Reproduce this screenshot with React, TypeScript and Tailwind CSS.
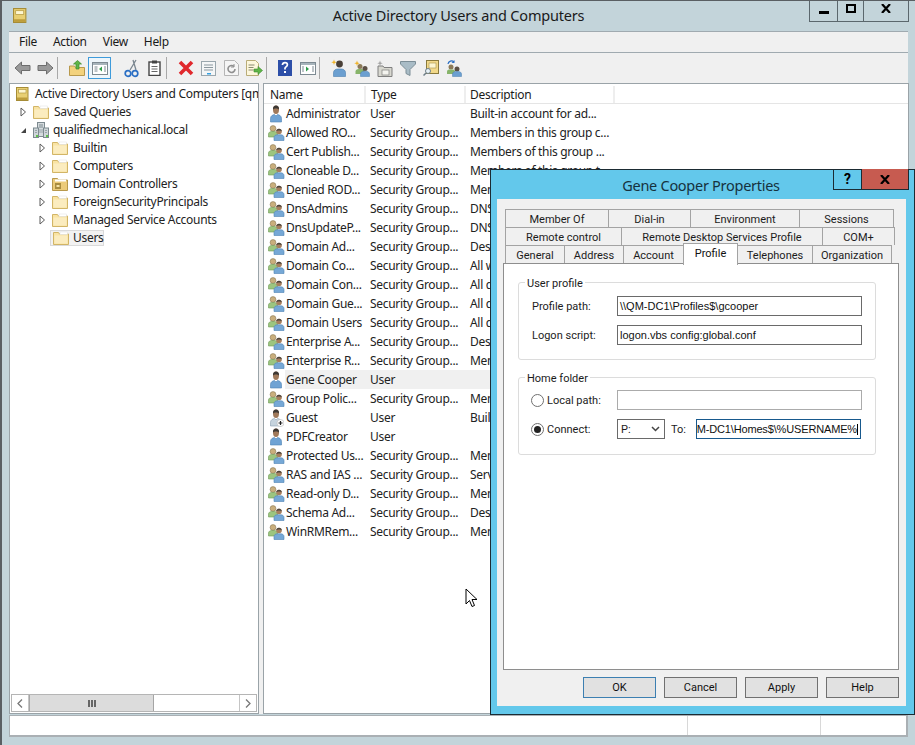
import React from "react";

const F = "[font-family:'Noto_Sans','Liberation_Sans',sans-serif]";

const Folder = () => (
  <svg width="16" height="14" viewBox="0 0 16 14" className="shrink-0">
    <path d="M.5 13.500V1.500h5l1 1.500h9v10.500z" fill="#f9e3a3" stroke="#d2b566" />
    <rect x="7" y="1" width="7.500" height="2.500" fill="#fff" stroke="#ddd" strokeWidth=".5" />
    <path d="M1.500 12.500V4.500h13v8z" fill="#fbecbf" />
  </svg>
);
const SpecialFolder = () => (
  <svg width="16" height="14" viewBox="0 0 16 14" className="shrink-0">
    <path d="M.5 13.500V1.500h5l1 1.500h9v10.500z" fill="#eccb7a" stroke="#b8994c" />
    <rect x="3" y="2.500" width="11" height="2" fill="#fff" />
    <rect x="3" y="6" width="6" height="6" fill="#a98c3f" />
    <rect x="4.500" y="8" width="3" height="2" fill="#f7e3a5" />
  </svg>
);
const Snapin = ({ s = 14 }: { s?: number }) => (
  <svg width={s} height={s} viewBox="0 0 14 14" className="shrink-0">
    <rect x=".5" y=".5" width="11.500" height="13" fill="#e8cf72" stroke="#a68c36" />
    <rect x="2.500" y="2.500" width="7.500" height="3.500" fill="#fdf6d0" stroke="#b59a44" strokeWidth=".7" />
    <rect x="1" y="10.500" width="10.500" height="2.500" fill="#bd9d3b" />
  </svg>
);
const Domain = () => (
  <svg width="16" height="16" viewBox="0 0 16 16" className="shrink-0">
    <rect x="4.500" y=".5" width="7" height="14" fill="#d5dbde" stroke="#7d8a90" />
    <path d="M6 3h4M6 5h4" stroke="#7d8a90" />
    <rect x=".5" y="6" width="5" height="9.500" fill="#cfd6d9" stroke="#7d8a90" />
    <rect x="10.500" y="6" width="5" height="9.500" fill="#cfd6d9" stroke="#7d8a90" />
    <path d="M2 8.500h2M2 10.500h2M12 8.500h2M12 10.500h2M6 8h4M6 10h4" stroke="#98a4a9" />
    <rect x="3" y="13" width="2" height="2" fill="#5fc24a" />
    <rect x="13" y="13" width="2" height="2" fill="#5fc24a" />
  </svg>
);
const UserIcon = ({ guest }: { guest?: boolean }) => (
  <svg width="16" height="18" viewBox="0 0 16 18" className="shrink-0">
    <ellipse cx="8" cy="4.700" rx="3" ry="4.200" fill="#a0795a" />
    <path d="M5 4.500C4.800 1.500 6.300.5 8 .5s3.200 1 3 4C10 3 6 3 5 4.500z" fill="#3c3834" />
    <path d="M2.500 17v-3.700C2.500 11 4.800 9.700 6.500 9.500L8 11l1.500-1.500c1.700.2 4 1.500 4 3.800V17z" fill={guest ? "#c6d3dd" : "#6fa3d4"} stroke={guest ? "#8ba0b0" : "#4f83b4"} strokeWidth=".6" />
    {guest && <circle cx="12.500" cy="14" r="3.500" fill="#fff" stroke="#aaa" strokeWidth=".5" />}
    {guest && <path d="M10.500 14h4M12.500 12v4" stroke="#222" strokeWidth="1.200" />}
  </svg>
);
const GroupIcon = () => (
  <svg width="17" height="16" viewBox="0 0 17 16" className="shrink-0">
    <circle cx="5" cy="3.500" r="2.900" fill="#c9ae7c" stroke="#8b7a58" strokeWidth=".6" />
    <path d="M.5 12V9c0-1.500 1.500-2.500 3-2.500h3c1.500 0 3 1 3 2.500v3z" fill="#9cc57f" stroke="#6f9a58" strokeWidth=".6" />
    <circle cx="11" cy="6.500" r="2.800" fill="#a67f5e" />
    <path d="M8.300 6.300C8.200 4.500 9.500 3.700 11 3.700s2.800.8 2.700 2.600c-1-1-4.400-1-5.400 0z" fill="#4a443c" />
    <path d="M6 15.500v-3c0-1.600 1.500-2.700 3-2.700h4c1.500 0 3 1.100 3 2.700v3z" fill="#76a8d6" stroke="#4f83b4" strokeWidth=".6" />
  </svg>
);

const Collapsed = () => (
  <svg width="7" height="10" viewBox="0 0 7 10" className="shrink-0">
    <path d="M1 1l4.500 4L1 9z" fill="#fff" stroke="#5a5a5a" />
  </svg>
);
const Expanded = () => (
  <svg width="7" height="7" viewBox="0 0 7 7" className="shrink-0">
    <path d="M6 1v5H1z" fill="#444" />
  </svg>
);

const tools: { ml: number; w?: number; sep?: boolean; el?: React.ReactNode; active?: boolean }[] = [
  { ml: 0, el: <svg width="17" height="14" viewBox="0 0 17 14"><path d="M1 7l6.500-6v3.500H16v5H7.500V13z" fill="#9a9a9a" stroke="#6d6d6d" /></svg> },
  { ml: 0, el: <svg width="17" height="14" viewBox="0 0 17 14"><path d="M16 7L9.500 1v3.500H1v5h8.500V13z" fill="#9a9a9a" stroke="#6d6d6d" /></svg> },
  { ml: 0, sep: true },
  { ml: 7, el: <svg width="16" height="16" viewBox="0 0 16 16"><path d="M.5 15.500V6h5l1 1.500h9v8z" fill="#f3d27d" stroke="#b8994c" /><path d="M7 9V4H4.500L8.500.5l4 3.500H10v5z" fill="#5fb548" stroke="#3d8a2c" strokeWidth=".7" /></svg> },
  { ml: 0, active: true, el: <svg width="16" height="13" viewBox="0 0 16 13"><rect x=".5" y=".5" width="15" height="12" fill="#fff" stroke="#7d8a92" /><rect x="1" y="1" width="14" height="2" fill="#a7b4bb" /><path d="M2.500 5h3M2.500 7h3M2.500 9h3M12 5h2M12 7h2M12 9h2" stroke="#7d8a92" /><path d="M10 4.500v5L7 7z" fill="#2f9e4a" /></svg> },
  { ml: 9, el: <svg width="15" height="19" viewBox="0 0 15 19"><path d="M12 1L6 11M9 1l3 10" stroke="#7b8790" strokeWidth="1.300" fill="none" /><circle cx="4" cy="14.500" r="2.800" fill="none" stroke="#2b6fc4" strokeWidth="1.700" /><circle cx="11" cy="14.500" r="2.800" fill="none" stroke="#2b6fc4" strokeWidth="1.700" /></svg> },
  { ml: 0, el: <svg width="13" height="16" viewBox="0 0 13 16"><rect x="1" y="2" width="11" height="13.500" fill="#fff" stroke="#444" strokeWidth="1.400" /><rect x="4" y=".5" width="5" height="3" fill="#444" /><path d="M3.500 6.500h6M3.500 9h6M3.500 11.500h6" stroke="#666" /></svg> },
  { ml: 0, sep: true },
  { ml: 7, el: <svg width="16" height="16" viewBox="0 0 16 16"><path d="M2 2l12 12M14 2L2 14" stroke="#e0282c" strokeWidth="3.600" /></svg> },
  { ml: 0, el: <svg width="15" height="15" viewBox="0 0 15 15"><rect x=".5" y=".5" width="14" height="14" fill="#f4f6f7" stroke="#9aa7ae" /><path d="M3 4h9M3 6.500h9M3 9h9" stroke="#8a979e" /><rect x="6" y="12" width="4" height="1.500" fill="#35a0e0" /></svg> },
  { ml: 0, el: <svg width="15" height="16" viewBox="0 0 15 16"><path d="M.5.500h10l4 4v11H.500z" fill="#f5f5f5" stroke="#b5b5b5" /><path d="M11 9a3.500 3.500 0 1 1-1-2.500" fill="none" stroke="#8f8f8f" strokeWidth="1.600" /><path d="M10 4v3H7" fill="none" stroke="#8f8f8f" /></svg> },
  { ml: 0, el: <svg width="17" height="16" viewBox="0 0 17 16"><path d="M.5.500h9l3 3v12H.500z" fill="#fdf7dc" stroke="#b9ac78" /><path d="M2.500 5h6M2.500 7.500h5M2.500 10h5" stroke="#8a8a70" /><path d="M8 9h4V6.500l4.500 4-4.500 4V12H8z" fill="#5fb548" stroke="#3d8a2c" strokeWidth=".6" /></svg> },
  { ml: 0, sep: true },
  { ml: 6, el: <svg width="14" height="16" viewBox="0 0 14 16"><rect width="14" height="16" fill="#2d4fa8" /><path d="M7 9.500V8.200c0-1.200 2.400-1.500 2.400-3.400C9.400 3.400 8.300 2.700 7 2.700S4.600 3.400 4.400 5" fill="none" stroke="#fff" strokeWidth="1.700" /><rect x="6" y="11" width="2" height="2" fill="#fff" /></svg> },
  { ml: 0, el: <svg width="16" height="13" viewBox="0 0 16 13"><rect x=".5" y=".5" width="15" height="12" fill="#fff" stroke="#7d8a92" /><rect x="1" y="1" width="14" height="2" fill="#a7b4bb" /><path d="M12 5h2M12 7h2M12 9h2M2 5h2M2 7h2M2 9h2" stroke="#7d8a92" /><path d="M6 4.500v5L9 7z" fill="#2f9e4a" /></svg> },
  { ml: 0, sep: true },
  { ml: 7, el: <svg width="16" height="18" viewBox="0 0 16 18"><path d="M3 .5l.7 2 2 .7-2 .7-.7 2-.7-2-2-.7 2-.7z" fill="#f0b429" /><circle cx="8.500" cy="5" r="3.400" fill="#4a4038" /><path d="M2.500 17.500v-4c0-2 2-3.500 4-3.500h4c2 0 4 1.500 4 3.500v4z" fill="#6b9fd0" stroke="#4a7eaf" strokeWidth=".6" /></svg> },
  { ml: 0, el: <svg width="16" height="17" viewBox="0 0 16 17"><path d="M3 .5l.7 2 2 .7-2 .7-.7 2-.7-2-2-.7 2-.7z" fill="#f0b429" /><circle cx="6" cy="6.500" r="2.500" fill="#8b7a58" /><path d="M1.500 14v-2.500c0-1.500 1.500-2.500 3-2.500h3c1.500 0 3 1 3 2.500V14z" fill="#87b46a" /><circle cx="11" cy="8.500" r="2.500" fill="#5b5045" /><path d="M6.500 16.500v-2.500c0-1.500 1.500-2.800 3-2.800h3c1.500 0 3 1.300 3 2.800v2.500z" fill="#6b9fd0" stroke="#4a7eaf" strokeWidth=".5" /></svg> },
  { ml: 0, el: <svg width="17" height="17" viewBox="0 0 17 17"><path d="M4 .5l.7 2 2 .7-2 .7-.7 2-.7-2-2-.7 2-.7z" fill="#a5a5a5" /><path d="M2 6h5l1 1.500h8v9H2z" fill="#d8d8d0" stroke="#7f7f7f" /><rect x="6" y="10" width="7" height="5" fill="#f4f4ef" stroke="#7f7f7f" strokeWidth=".7" /></svg> },
  { ml: 0, el: <svg width="16" height="15" viewBox="0 0 16 15"><path d="M.5.500h15v2.500L10 8.500v6L6 12.500V8.500L.500 3z" fill="#a9bcc6" stroke="#7c8e97" /></svg> },
  { ml: 0, el: <svg width="16" height="16" viewBox="0 0 16 16"><rect x="3.500" y=".5" width="12" height="13" fill="#f2d98a" stroke="#8a7a3c" /><rect x="6" y="3" width="7" height="5" fill="#fdf6d0" stroke="#a5924b" strokeWidth=".6" /><circle cx="5" cy="11" r="2.500" fill="#e9f2f7" stroke="#6f7f88" /><path d="M3 13l-2.500 2.500" stroke="#6f7f88" strokeWidth="1.500" /></svg> },
  { ml: 0, el: <svg width="16" height="17" viewBox="0 0 16 17"><path d="M2 4a3.500 3.500 0 0 1 6-2" fill="none" stroke="#2b6fc4" strokeWidth="1.200" /><path d="M8.500 0v3h-3" fill="#2b6fc4" /><circle cx="5" cy="7" r="2.500" fill="#8b7a58" /><path d="M1 14v-2.500C1 10 2.500 9.500 4 9.500h2c1.500 0 3 .5 3 2V14z" fill="#87b46a" /><circle cx="11" cy="9" r="2.500" fill="#5b5045" /><path d="M6.500 16.500V14c0-1.500 1.500-2.500 3-2.500h3c1.500 0 3 1 3 2.500v2.500z" fill="#6b9fd0" stroke="#4a7eaf" strokeWidth=".5" /></svg> },
];

const SG = "Security Group...";
const rows: [string, string, string, "u" | "g" | "x"][] = [
  ["Administrator", "User", "Built-in account for ad...", "u"],
  ["Allowed RO...", SG, "Members in this group c...", "g"],
  ["Cert Publish...", SG, "Members of this group ...", "g"],
  ["Cloneable D...", SG, "Members of this group t...", "g"],
  ["Denied ROD...", SG, "Members in this group c...", "g"],
  ["DnsAdmins", SG, "DNS Administrators Gro...", "g"],
  ["DnsUpdateP...", SG, "DNS clients who are per...", "g"],
  ["Domain Ad...", SG, "Designated administrato...", "g"],
  ["Domain Co...", SG, "All workstations and ser...", "g"],
  ["Domain Con...", SG, "All domain controllers i...", "g"],
  ["Domain Gue...", SG, "All domain guests", "g"],
  ["Domain Users", SG, "All domain users", "g"],
  ["Enterprise A...", SG, "Designated administrato...", "g"],
  ["Enterprise R...", SG, "Members of this group ...", "g"],
  ["Gene Cooper", "User", "", "u"],
  ["Group Polic...", SG, "Members in this group c...", "g"],
  ["Guest", "User", "Built-in account for gue...", "x"],
  ["PDFCreator", "User", "", "u"],
  ["Protected Us...", SG, "Members of this group ...", "g"],
  ["RAS and IAS ...", SG, "Servers in this group can...", "g"],
  ["Read-only D...", SG, "Members of this group ...", "g"],
  ["Schema Ad...", SG, "Designated administrato...", "g"],
  ["WinRMRem...", SG, "Members of this group ...", "g"],
];

const tree: [string, number][] = [
  ["Builtin", 0],
  ["Computers", 0],
  ["Domain Controllers", 1],
  ["ForeignSecurityPrincipals", 0],
  ["Managed Service Accounts", 0],
];

const tabRows: [string, number][][] = [
  [["Member Of", 104], ["Dial-in", 83], ["Environment", 110], ["Sessions", 95]],
  [["Remote control", 117], ["Remote Desktop Services Profile", 202], ["COM+", 73]],
];
const lowTabs: [string, number][] = [["General", 60], ["Address", 60], ["Account", 61], ["Profile", 55], ["Telephones", 76], ["Organization", 80]];

const TextBox = ({ children, w, border }: { children?: React.ReactNode; w: string; border: string }) => (
  <div className={`h-5 ${w} ${border} border bg-white flex items-center px-[2px] overflow-hidden whitespace-nowrap text-[11px] text-[#111] [font-family:'Liberation_Sans',sans-serif]`}>
    {children}
  </div>
);

export default function App() {
  return (
    <div className={`relative w-[915px] h-[745px] overflow-hidden bg-[#c3d4da] border-t border-l-2 border-[#5a5f63] text-[12px] leading-none tracking-[-0.3px] text-[#222] ${F} flex flex-col`}>
      {/* title bar */}
      <div className="h-[30px] shrink-0 relative flex items-center justify-center">
        <div className="absolute left-[11px] top-[7px]"><Snapin s={15} /></div>
        <span className="text-[14.5px] text-[#1a1a1a] -mt-px tracking-[-0.2px]">Active Directory Users and Computers</span>
        <div className="absolute right-[6px] -top-px flex h-[22px] border border-t-0 border-[#5b676d] w-[100px]">
          <div className="w-[28px] border-r border-[#5b676d] flex items-center justify-center"><div className="w-[10px] h-[3px] bg-black mt-1" /></div>
          <div className="w-[26px] border-r border-[#5b676d] flex items-center justify-center"><div className="w-[10px] h-[9px] border-2 border-black -mt-1" /></div>
          <div className="flex-1 flex items-center justify-center"><svg width="10" height="9" viewBox="0 0 10 9" className="-mt-1"><path d="M1 0l8 9M9 0L1 9" stroke="#000" strokeWidth="2.200" /></svg></div>
        </div>
      </div>
      {/* menu */}
      <div className="ml-[7px] mr-[7px] h-[22px] shrink-0 bg-[#f0f0f0] border-t border-b border-[#a0aab0] flex items-center pl-[10px] gap-[16px] text-[#1a1a1a]">
        <span>File</span><span>Action</span><span>View</span><span>Help</span>
      </div>
      {/* toolbar */}
      <div className="ml-[7px] mr-[7px] h-[30px] shrink-0 bg-[#f0f0f0] flex items-center pl-[2px]">
        {tools.map((t, i) =>
          t.sep ? (
            <div key={i} className="w-px h-[22px] bg-[#a9a9a9] shrink-0" />
          ) : (
            <div key={i} style={{ marginLeft: t.ml }} className={`w-[23px] h-[22px] shrink-0 flex items-center justify-center ${t.active ? "border border-[#3e9bdb] bg-[#eef6fb]" : ""}`}>
              {t.el}
            </div>
          )
        )}
      </div>
      {/* panes */}
      <div className="ml-[7px] mr-[6px] h-[631px] shrink-0 flex bg-[#f0f0f0]">
        <div className="w-[250px] shrink-0 bg-white border border-[#9aa3a8] flex flex-col overflow-hidden">
          <div className="flex-1 pt-px whitespace-nowrap overflow-hidden">
            <div className="h-[18px] flex items-center pl-[6px] gap-[5px]"><Snapin /><span>Active Directory Users and Computers [qm</span></div>
            <div className="h-[18px] flex items-center pl-[10px] gap-[6px]"><Collapsed /><Folder /><span className="-ml-px">Saved Queries</span></div>
            <div className="h-[18px] flex items-center pl-[10px] gap-[6px]"><Expanded /><Domain /><span className="-ml-[2px]">qualifiedmechanical.local</span></div>
            {tree.map(([n, s]) => (
              <div key={n} className="h-[18px] flex items-center pl-[29px] gap-[6px]"><Collapsed />{s ? <SpecialFolder /> : <Folder />}<span className="-ml-px">{n}</span></div>
            ))}
            <div className="h-[16px] my-px flex items-center ml-[40px] w-[54px] pl-[2px] gap-[5px] bg-[#f2f2f2] border border-[#dadada]"><Folder /><span className="-ml-px">Users</span></div>
          </div>
          <div className="h-[18px] mx-px mb-[1px] shrink-0 border border-[#b5b5b5] flex items-stretch">
            <div className="w-[17px] border-r border-[#c5c5c5] flex items-center justify-center"><svg width="6" height="9" viewBox="0 0 6 9"><path d="M5 .5L1 4.500l4 4" fill="none" stroke="#777" strokeWidth="1.300" /></svg></div>
            <div className="w-[125px] bg-[#dcdcdc] border-x border-[#a5a5a5] flex items-center justify-center gap-px">
              <div className="w-[2px] h-[7px] bg-[#666]" /><div className="w-[2px] h-[7px] bg-[#666]" /><div className="w-[2px] h-[7px] bg-[#666]" />
            </div>
            <div className="flex-1" />
            <div className="w-[17px] border-l border-[#c5c5c5] flex items-center justify-center"><svg width="6" height="9" viewBox="0 0 6 9"><path d="M1 .5l4 4-4 4" fill="none" stroke="#777" strokeWidth="1.300" /></svg></div>
          </div>
        </div>
        <div className="w-[4px] shrink-0" />
        <div className="flex-1 bg-white border border-[#9aa3a8] overflow-hidden whitespace-nowrap">
          <div className="h-[20px] flex items-center text-[#1a1a1a] border-b border-[#e5e5e5] pt-[2px]">
            <div className="w-[101px] h-full border-r-2 border-[#eee] pl-[5px] flex items-center ml-px">Name</div>
            <div className="w-[100px] h-full border-r-2 border-[#eee] pl-[5px] flex items-center">Type</div>
            <div className="w-[149px] h-full border-r-2 border-[#eee] pl-[4px] flex items-center">Description</div>
          </div>
          <div>
            {rows.map(([n, t, d, k]) => (
              <div key={n} className="h-[19px] flex items-center">
                <div className="w-[21px] pl-[4px] flex justify-start shrink-0">{k === "u" ? <UserIcon /> : k === "x" ? <UserIcon guest /> : <GroupIcon />}</div>
                <div className={`flex-1 h-full flex items-center ${n === "Gene Cooper" ? "bg-[#f0f0f0]" : ""}`}>
                  <div className="w-[85px] shrink-0 pl-px">{n}</div>
                  <div className="w-[100px] shrink-0">{t}</div>
                  <div>{d}</div>
                </div>
              </div>
            ))}
          </div>
        </div>
      </div>
      {/* status bar */}
      <div className="ml-[7px] mt-px w-[899px] h-[22px] shrink-0 bg-white border-b-2 border-r-2 border-[#aab0b4] border-l border-t flex">
        <div className="w-[678px] border-r border-[#d8d8d8]" />
        <div className="w-[133px] border-r border-[#d8d8d8]" />
      </div>

      {/* mouse cursor */}
      <svg className="absolute left-[463px] top-[587px]" width="14" height="20" viewBox="0 0 14 20">
        <path d="M1 1v15l3.500-3.500 2.500 6 2.500-1-2.500-6H12z" fill="#fff" stroke="#000" />
      </svg>

      {/* properties window */}
      <div className="absolute left-[488px] top-[168px] w-[425px] h-[546px] bg-[#63c8eb] border border-[#1b2b33] flex flex-col tracking-normal [font-family:Roboto,'Liberation_Sans',sans-serif] text-[11px]">
        <div className="h-[29px] shrink-0 relative flex items-center justify-center">
          <span className="text-[14.5px] text-[#16323e] -ml-[3px] mt-[1px] tracking-[-0.28px] [font-family:'Noto_Sans',sans-serif]">Gene Cooper Properties</span>
          <div className="absolute right-[5px] -top-px flex h-[21px] border border-t-0 border-[#1b2b33]">
            <div className="w-[28px] border-r border-[#1b2b33] flex items-center justify-center text-[14px] font-bold text-black">?</div>
            <div className="w-[46px] bg-[#c75b50] flex items-center justify-center"><svg width="10" height="9" viewBox="0 0 10 9"><path d="M1 0l8 9M9 0L1 9" stroke="#000" strokeWidth="2.200" /></svg></div>
          </div>
        </div>
        <div className="ml-[6px] mr-[8px] h-[507px] bg-[#f0f0f0] px-[6px] pt-[10px] flex flex-col text-[#1c1c1c]">
          <div className="pl-[2px]">
            {tabRows.map((r, i) => (
              <div key={i} className="flex h-[18px]">
                {r.map(([n, w]) => (
                  <div key={n} style={{ width: w }} className="border border-b-0 border-[#a3a3a3] -mr-px pt-[2px] flex items-center justify-center">{n}</div>
                ))}
              </div>
            ))}
            <div className="flex h-[18px] relative z-10">
              {lowTabs.map(([n, w]) => (
                <div key={n} style={{ width: w }} className={n === "Profile" ? "h-[22px] -mt-[2px] pb-[2px] bg-white border border-b-0 border-[#a3a3a3] -mr-px flex items-center justify-center text-[#111]" : "border border-b-0 border-[#a3a3a3] -mr-px pt-[2px] flex items-center justify-center"}>{n}</div>
              ))}
            </div>
          </div>
          <div className="h-[407px] w-[396px] bg-white border border-[#8e8e8e] px-[14px] pt-[18px]">
            <div className="relative h-[78px] w-[358px] border border-[#dcdcdc] rounded-[3px] pl-[13px] pt-[13px]">
              <span className="absolute left-[6px] -top-[5px] bg-white px-[2px]">User profile</span>
              <div className="flex items-center h-5"><span className="w-[85px]">Profile path:</span><TextBox w="w-[245px]" border="border-[#6a6a6a]">\\QM-DC1\Profiles$\gcooper</TextBox></div>
              <div className="flex items-center h-5 mt-[9px]"><span className="w-[85px]">Logon script:</span><TextBox w="w-[245px]" border="border-[#6a6a6a]">logon.vbs config:global.conf</TextBox></div>
            </div>
            <div className="relative h-[78px] w-[358px] mt-[17px] border border-[#dcdcdc] rounded-[3px] pl-[13px] pt-[12px]">
              <span className="absolute left-[6px] -top-[5px] bg-white px-[2px]">Home folder</span>
              <div className="flex items-center h-5">
                <div className="w-[13px] h-[13px] -ml-px rounded-full border border-[#707070] bg-white mr-[3px]" />
                <span className="w-[70px]">Local path:</span>
                <TextBox w="w-[245px]" border="border-[#ababab]" />
              </div>
              <div className="flex items-center h-5 mt-[9px]">
                <div className="w-[13px] h-[13px] -ml-px rounded-full border border-[#707070] bg-white mr-[3px] flex items-center justify-center"><div className="w-[7px] h-[7px] rounded-full bg-[#222]" /></div>
                <span className="w-[70px]">Connect:</span>
                <div className="w-[48px] h-5 border border-[#6a6a6a] bg-white flex items-center justify-between pl-[3px] pr-[4px]">
                  <span>P:</span>
                  <svg width="9" height="6" viewBox="0 0 9 6"><path d="M1 1l3.500 3.500L8 1" fill="none" stroke="#444" strokeWidth="1.500" /></svg>
                </div>
                <span className="w-[31px] pl-[6px]">To:</span>
                <TextBox w="w-[165px] justify-end" border="border-[#17598d]"><span className="shrink-0 tracking-[-0.15px] border-r border-black">M-DC1\Homes$\%USERNAME%</span></TextBox>
              </div>
            </div>
          </div>
          <div className="flex justify-end gap-2 mt-[7px] w-[396px]">
            {["OK", "Cancel", "Apply", "Help"].map((b) => (
              <div key={b} className={`w-[73px] h-[21px] bg-[#e1e1e1] border flex items-center justify-center text-[#111] ${b === "OK" ? "border-[#3c7fb1]" : "border-[#707070]"}`}>{b}</div>
            ))}
          </div>
        </div>
      </div>
    </div>
  );
}
